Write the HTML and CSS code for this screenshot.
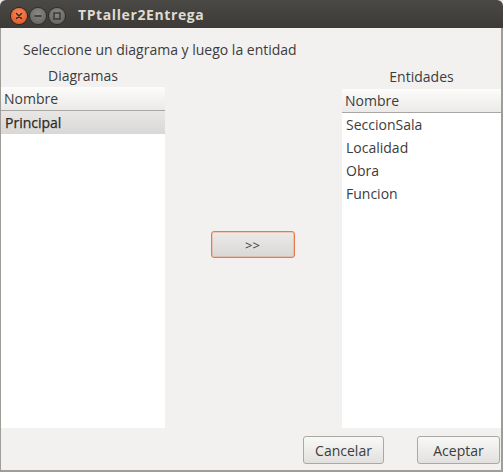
FILE: index.html
```html
<!DOCTYPE html>
<html>
<head>
<meta charset="utf-8">
<link rel="stylesheet" href="styles.css">
</head>
<body>
<div class="window">
  <div class="titlebar">
    <div class="wbtns">
      <span class="wbtn close"><svg width="16" height="16" viewBox="0 0 16 16"><path d="M5.5 5.5 L10.5 10.5 M10.5 5.5 L5.5 10.5" stroke="#3a2a22" stroke-width="1.5" stroke-linecap="round"/></svg></span>
      <span class="wbtn"><svg width="16" height="16" viewBox="0 0 16 16"><path d="M4.5 8 H11.5" stroke="#2f2f2c" stroke-width="1.5"/></svg></span>
      <span class="wbtn"><svg width="16" height="16" viewBox="0 0 16 16"><rect x="5" y="5" width="6" height="6" fill="none" stroke="#2f2f2c" stroke-width="1.3"/></svg></span>
    </div>
    <div class="title">TPtaller2Entrega</div>
  </div>
  <div class="content">
    <div class="prompt">Seleccione un diagrama y luego la entidad</div>
    <div class="main">
      <div class="col left">
        <div class="col-label">Diagramas</div>
        <div class="list">
          <div class="list-head">Nombre</div>
          <div class="row selected">Principal</div>
        </div>
      </div>
      <div class="middle">
        <button class="btn focus">&gt;&gt;</button>
      </div>
      <div class="col right">
        <div class="col-label">Entidades</div>
        <div class="list">
          <div class="list-head">Nombre</div>
          <div class="row">SeccionSala</div>
          <div class="row">Localidad</div>
          <div class="row">Obra</div>
          <div class="row">Funcion</div>
        </div>
      </div>
    </div>
    <div class="actions">
      <button class="btn action">Cancelar</button>
      <button class="btn action">Aceptar</button>
    </div>
  </div>
</div>
</body>
</html>
```

FILE: styles.css
```css
html, body {
  margin: 0;
  padding: 0;
  background: #e9e8e6;
}
body {
  font-family: "Open Sans", "DejaVu Sans", sans-serif;
  font-size: 14px;
  color: #3c3c3c;
}
.window {
  width: 503px;
  height: 472px;
  display: flex;
  flex-direction: column;
}
.titlebar {
  height: 28px;
  flex: none;
  background: linear-gradient(#4a4945, #3c3b37);
  border-radius: 6px 6px 0 0;
  display: flex;
  align-items: center;
  box-sizing: border-box;
  padding-left: 11px;
  padding-top: 3px;
}
.wbtns {
  display: flex;
  gap: 3px;
}
.wbtn {
  width: 16px;
  height: 16px;
  border-radius: 50%;
  background: radial-gradient(circle at 50% 35%, #8a8985, #5e5d59);
  box-shadow: 0 0 0 1px #2e2d2a;
  display: block;
}
.wbtn svg { display: block; }
.wbtn.close {
  background: radial-gradient(circle at 50% 35%, #f78a5a, #e04e1c);
  box-shadow: 0 0 0 1px #3a2219;
}
.title {
  margin-left: 13px;
  margin-top: -3px;
  color: #dfdbd2;
  font-weight: bold;
  font-size: 14px;
  letter-spacing: 0.6px;
}
.content {
  flex: 1;
  background: #f2f1f0;
  border-left: 1px solid #9f9d98;
  border-right: 2px solid #9f9d98;
  border-bottom: 2px solid #9f9d98;
  display: flex;
  flex-direction: column;
  min-height: 0;
}
.prompt {
  padding: 12px 0 0 22px;
  height: 27px;
  line-height: 19px;
}
.main {
  display: flex;
  flex: 1;
  min-height: 0;
}
.col {
  display: flex;
  flex-direction: column;
}
.left { width: 164px; }
.right { width: 159px; }
.col-label {
  text-align: center;
  height: 20px;
  line-height: 18px;
}
.right .col-label {
  height: 22px;
  line-height: 20px;
}
.list {
  flex: 1;
  background: #ffffff;
}
.list-head {
  height: 24px;
  line-height: 24px;
  box-sizing: border-box;
  padding-left: 3px;
  background: linear-gradient(#fcfcfb, #ebeae8);
  border-bottom: 1px solid #a8a6a2;
}
.row {
  height: 23px;
  line-height: 24px;
  padding-left: 4px;
}
.row.selected {
  background: linear-gradient(#e8e7e5, #d9d8d6);
  color: #2a2a2a;
  -webkit-text-stroke: 0.25px #2a2a2a;
}
.middle {
  flex: 1;
  display: flex;
  justify-content: center;
  align-items: flex-start;
  padding-top: 164px;
}
.btn {
  font-family: inherit;
  font-size: 14px;
  color: #3c3c3c;
  background: linear-gradient(#f8f8f7, #e2e1df);
  border: 1px solid #a9a8a3;
  border-radius: 3px;
  padding: 0;
  margin: 0;
}
.btn.focus {
  width: 84px;
  height: 27px;
  margin-left: -2px;
  border-color: #e8794b;
  box-shadow: inset 0 0 0 1px rgba(240, 140, 100, 0.35);
  background: linear-gradient(#ebeae8, #d9d8d6);
  font-size: 13px;
}
.actions {
  flex: none;
  height: 42px;
  display: flex;
  justify-content: flex-end;
  align-items: flex-start;
  padding-top: 8px;
  box-sizing: border-box;
  gap: 33px;
  padding-right: 1px;
}
.btn.action {
  width: 81px;
  height: 28px;
}
.btn.action:last-child { width: 83px; }
```
